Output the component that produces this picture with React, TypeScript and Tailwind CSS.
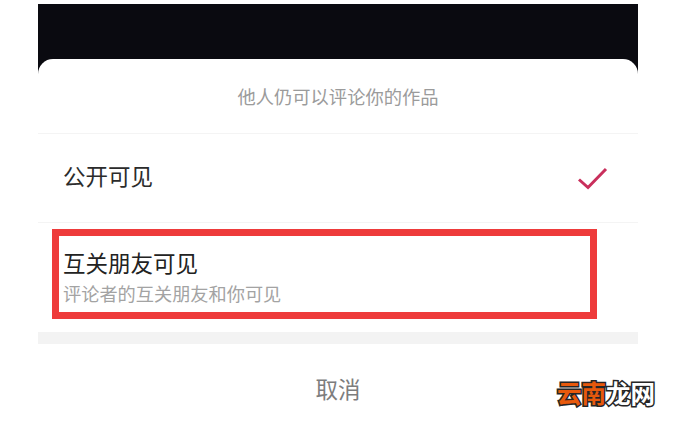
const CJK = "font-['Noto_Sans_CJK_SC','Liberation_Sans',sans-serif]";

export default function App() {
    return (
        <div className={`relative h-[422px] w-[691px] overflow-hidden bg-white pt-[4px] pl-[38px] ${CJK}`}>
            <div className="w-[600px]">
                <div className="h-[70px] bg-[#0a0a10]" />
                <div className="relative -mt-[15px] rounded-t-[15px] bg-white">
                    <div className="flex h-[74px] items-end justify-center pb-[25px] text-[18.3px] leading-[24px] text-[#9b9b9b]">
                        他人仍可以评论你的作品
                    </div>
                    <div className="flex h-[90px] items-center justify-between border-y border-[#f4f4f4] pr-[29px] pl-[25px]">
                        <span className="pb-[6px] text-[22.5px] leading-[30px] text-[#2b2b2b]">公开可见</span>
                        <svg width="32" height="26" viewBox="0 0 32 26" fill="none" className="mt-[1px]">
                            <path d="M2 13.5 L11 21.5 L29 3" stroke="#c92f5c" strokeWidth="3" />
                        </svg>
                    </div>
                    <div className="ml-[14px] mt-[6px] flex h-[90px] w-[545px] flex-col border-[7px] border-[#ee3b3b] pl-[5px] pt-[11px]">
                        <span className="-ml-[1px] text-[22.5px] leading-[30px] text-[#222222]">互关朋友可见</span>
                        <span className="-ml-[1px] mt-[4px] text-[18.2px] leading-[24px] text-[#a3a3a3]">评论者的互关朋友和你可见</span>
                    </div>
                    <div className="mt-[13px] h-[12px] bg-[#f3f3f3]" />
                    <div className="flex h-[77px] items-center justify-center pt-[12px] text-[22.5px] text-[#7d7d7d]">
                        取消
                    </div>
                </div>
            </div>
            <div className="absolute top-[376px] left-[557px] flex text-[24.5px] leading-[34px] font-bold [paint-order:stroke_fill] [-webkit-text-stroke:3px_#262626]">
                <span className="text-[#e8590c]">云南</span>
                <span className="text-white">龙网</span>
            </div>
        </div>
    );
}
